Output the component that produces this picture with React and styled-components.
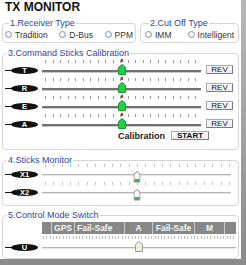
import React from "react";
import styled, { createGlobalStyle } from "styled-components";

const GlobalStyle = createGlobalStyle`
  html, body {
    margin: 0;
    padding: 0;
    background: #fff;
  }
  body {
    font-family: "Liberation Sans", Arial, sans-serif;
  }
`;

const Frame = styled.div`
  width: 246px;
  height: 265px;
  background: linear-gradient(to bottom, #b8b8b8, #8a8a8a);
  overflow: hidden;
`;

const Panel = styled.div`
  width: 241px;
  height: 259px;
  background: #fff;
  box-sizing: border-box;
  padding: 0 2px 0 2px;
  display: flex;
  flex-direction: column;
`;

const Title = styled.div`
  height: 19px;
  padding-left: 3px;
  font-size: 12px;
  font-weight: bold;
  line-height: 14px;
  color: #111;
`;

const TopRow = styled.div`
  display: flex;
  gap: 4px;
`;

const Group = styled.fieldset`
  margin: ${(p) => p.$mt || 0}px 0 0 0;
  padding: 0 ${(p) => p.$px || 0}px ${(p) => p.$pb || 0}px;
  min-width: 0;
  width: ${(p) => (p.$w ? `${p.$w}px` : "auto")};
  flex: ${(p) => (p.$w ? "none" : 1)};
  box-sizing: border-box;
  border: 1px solid #d6d6d6;
  border-radius: 4px;
`;

const Legend = styled.legend`
  margin-left: 4px;
  padding: 0 1px;
  font-size: 9px;
  line-height: 8px;
  color: #2a47a6;
`;

const RadioRow = styled.div`
  height: 15px;
  display: flex;
  align-items: center;
  justify-content: space-between;
`;

const RadioItem = styled.label`
  display: flex;
  align-items: center;
  gap: 3px;
  font-size: 8.5px;
  color: #333;
`;

const RadioDot = styled.span`
  width: 7px;
  height: 7px;
  box-sizing: border-box;
  border-radius: 50%;
  border: 1px solid #8794a4;
  background: radial-gradient(circle at 40% 35%, #ffffff, #dfe3ea);
`;

const Rows = styled.div`
  padding-top: ${(p) => p.$pt || 0}px;
`;

const Row = styled.div`
  height: 18px;
  display: flex;
  align-items: flex-start;
`;

const PillCell = styled.div`
  width: 37px;
  height: ${(p) => (p.$h ? `${p.$h}px` : "auto")};
  padding-left: 2px;
  padding-top: ${(p) => p.$pt}px;
  box-sizing: border-box;
  flex: none;
`;

const Pill = styled.span`
  position: relative;
  display: block;
  margin-left: 6px;
  width: 27px;
  height: 7px;
  border-radius: 50%;
  background: #111;
  color: #fff;
  font-size: 7.5px;
  font-weight: bold;
  line-height: 7px;
  text-align: center;

  &::before {
    content: "";
    position: absolute;
    left: -6px;
    top: 3px;
    width: 8px;
    height: 1px;
    background: #111;
  }
`;

const Track = styled.div`
  position: relative;
  width: ${(p) => p.$w}px;
  margin-left: 2px;
  flex: none;
  display: flex;
  flex-direction: column;
`;

const Ticks = styled.div`
  height: 3px;
  display: flex;
  justify-content: space-between;
  padding: 0 ${(p) => p.$pr}px 0 ${(p) => p.$pl}px;
`;

const Tick = styled.span`
  width: 1px;
  height: 100%;
  background: ${(p) => p.$c};
`;

const Line = styled.div`
  margin-top: ${(p) => p.$mt}px;
  height: ${(p) => (p.$strong ? 2 : 1)}px;
  background: ${(p) => (p.$strong ? "#727272" : "#b4b4b4")};
  border-bottom: 1px solid ${(p) => (p.$strong ? "#c9c9c9" : "#e6e6e6")};
`;

const CenterMark = styled.span`
  position: absolute;
  left: calc(50% - 1px);
  top: -1px;
  width: 2px;
  height: 3px;
  background: #e0262a;
`;

const Thumb = styled.svg`
  position: absolute;
  left: 50%;
  top: ${(p) => p.$top}px;
  transform: translateX(-50%);
`;

const Button = styled.button`
  margin: ${(p) => p.$mt || 0}px 0 0 ${(p) => p.$ml || 0}px;
  width: ${(p) => p.$w}px;
  height: 9px;
  padding: 0;
  box-sizing: border-box;
  border: 1px solid #7a7a7a;
  border-top-color: #a8a8a8;
  border-left-color: #a8a8a8;
  border-radius: 1px;
  background: linear-gradient(to bottom, #fdfdfd, #ececec);
  font-family: "Liberation Sans", Arial, sans-serif;
  font-size: 8px;
  font-weight: ${(p) => (p.$bold ? "bold" : "normal")};
  line-height: 7px;
  color: #111;
`;

const CalRow = styled.div`
  height: 11px;
  margin-top: -2px;
  padding-left: 115px;
  display: flex;
  align-items: center;
  gap: 6px;
`;

const CalLabel = styled.span`
  font-size: 9px;
  font-weight: bold;
  color: #222;
`;

const ModeRow = styled.div`
  display: flex;
  align-items: flex-end;
  padding-top: 3px;
`;

const ModeCol = styled.div`
  width: 194px;
  margin-left: 2px;
  display: flex;
  flex-direction: column;
`;

const ModeBar = styled.div`
  height: 12px;
  display: flex;
  background: #878787;
`;

const ModeSeg = styled.span`
  width: ${(p) => p.$w}px;
  box-sizing: border-box;
  border-right: ${(p) => (p.$last ? "none" : "1px solid #c9c9c9")};
  padding-left: ${(p) => (p.$left ? 2 : 0)}px;
  text-align: ${(p) => (p.$left ? "left" : "center")};
  font-size: 8.5px;
  font-weight: bold;
  line-height: 12px;
  color: #f4f4f4;
  white-space: nowrap;
`;

const ModeTicks = styled(Ticks)`
  margin-top: 2px;
`;

const ModeTrack = styled.div`
  position: relative;
  height: 16px;
`;

const ModeLine = styled(Line)`
  position: relative;
  top: 8px;
  margin-top: 0;
`;

const GreenThumb = () => (
  <Thumb $top={4} width="8" height="11" viewBox="0 0 8 11">
    <path
      d="M4 0.5 L7.5 3.5 L7.5 10 Q7.5 10.5 7 10.5 L1 10.5 Q0.5 10.5 0.5 10 L0.5 3.5 Z"
      fill="#24d046"
      stroke="#129a2c"
      strokeWidth="1"
    />
  </Thumb>
);

const MonitorThumb = () => (
  <Thumb $top={7} width="7" height="12" viewBox="0 0 7 12">
    <path
      d="M3.5 0.5 L6.5 3 L6.5 11 L0.5 11 L0.5 3 Z"
      fill="#f7f7f7"
      stroke="#8b8b8b"
      strokeWidth="1"
    />
    <rect x="1" y="8" width="5" height="3" fill="#3db45a" />
  </Thumb>
);

const ModeThumb = () => (
  <Thumb $top={2} width="8" height="11" viewBox="0 0 8 11">
    <path
      d="M4 0.5 L7.5 3.5 L7.5 10.5 L0.5 10.5 L0.5 3.5 Z"
      fill="#f0ede0"
      stroke="#9c9c94"
      strokeWidth="1"
    />
  </Thumb>
);

const range = (n) => Array.from({ length: n }, (_, i) => i);

const TickRow = ({ count, pl, pr, color }) => (
  <Ticks $pl={pl} $pr={pr}>
    {range(count).map((i) => (
      <Tick key={i} $c={color} />
    ))}
  </Ticks>
);

const channels = ["T", "R", "E", "A"];
const sticks = ["X1", "X2"];
const modes = [
  { w: 10, label: "" },
  { w: 23, label: "GPS" },
  { w: 50, label: "Fail-Safe", left: true },
  { w: 28, label: "A" },
  { w: 42, label: "Fail-Safe" },
  { w: 30, label: "M" },
  { w: 11, label: "", last: true },
];

const Radio = ({ label }) => (
  <RadioItem>
    <RadioDot />
    {label}
  </RadioItem>
);

export default function App() {
  return (
    <Frame>
      <GlobalStyle />
      <Panel>
        <Title>TX MONITOR</Title>

        <TopRow>
          <Group $w={134} $px={2}>
            <Legend>1.Receiver Type</Legend>
            <RadioRow>
              <Radio label="Tradition" />
              <Radio label="D-Bus" />
              <Radio label="PPM" />
            </RadioRow>
          </Group>
          <Group $px={4}>
            <Legend>2.Cut Off Type</Legend>
            <RadioRow>
              <Radio label="IMM" />
              <Radio label="Intelligent" />
            </RadioRow>
          </Group>
        </TopRow>

        <Group $mt={6} $pb={8}>
          <Legend>3.Command Sticks Calibration</Legend>
          <Rows $pt={3}>
            {channels.map((ch) => (
              <Row key={ch}>
                <PillCell $pt={7}>
                  <Pill>{ch}</Pill>
                </PillCell>
                <Track $w={159}>
                  <TickRow count={21} pl={3} pr={5} color="#9a9a9a" />
                  <Line $strong $mt={7} />
                  <CenterMark />
                  <GreenThumb />
                </Track>
                <Button $w={27} $ml={5} $mt={5}>
                  REV
                </Button>
              </Row>
            ))}
          </Rows>
          <CalRow>
            <CalLabel>Calibration</CalLabel>
            <Button $w={38} $bold>
              START
            </Button>
          </CalRow>
        </Group>

        <Group $mt={6} $pb={4}>
          <Legend>4.Sticks Monitor</Legend>
          <Rows>
            {sticks.map((s) => (
              <Row key={s}>
                <PillCell $pt={7}>
                  <Pill>{s}</Pill>
                </PillCell>
                <Track $w={189}>
                  <TickRow count={23} pl={3} pr={1} color="#c4c4c4" />
                  <Line $mt={7} />
                  <MonitorThumb />
                </Track>
              </Row>
            ))}
          </Rows>
        </Group>

        <Group $mt={5} $pb={2}>
          <Legend>5.Control Mode Switch</Legend>
          <ModeRow>
            <PillCell $h={16} $pt={4.5}>
              <Pill>U</Pill>
            </PillCell>
            <ModeCol>
              <ModeBar>
                {modes.map((m, i) => (
                  <ModeSeg key={i} $w={m.w} $left={m.left} $last={m.last}>
                    {m.label}
                  </ModeSeg>
                ))}
              </ModeBar>
              <ModeTicks $pl={1} $pr={1}>
                {range(59).map((i) => (
                  <Tick key={i} $c="#bdbdbd" />
                ))}
              </ModeTicks>
              <ModeTrack>
                <ModeLine />
                <ModeThumb />
              </ModeTrack>
            </ModeCol>
          </ModeRow>
        </Group>
      </Panel>
    </Frame>
  );
}
